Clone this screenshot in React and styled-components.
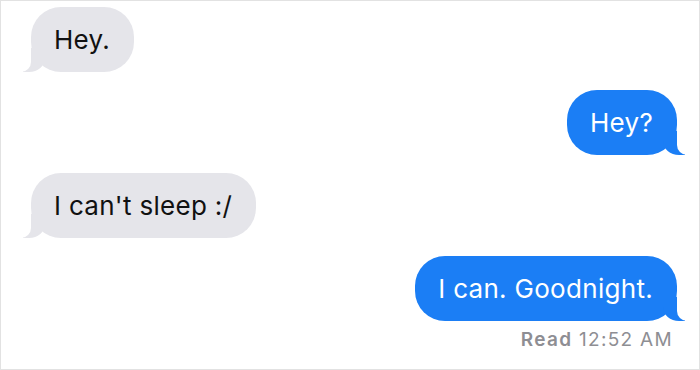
import React from "react";
import styled, { createGlobalStyle, css } from "styled-components";

const Global = createGlobalStyle`
  html, body { margin: 0; padding: 0; background: #ffffff; }
  body { font-family: Inter, "Liberation Sans", Arial, sans-serif; }
`;

const Screen = styled.div`
  box-sizing: border-box;
  width: 700px;
  height: 370px;
  border: 1px solid #e2e2e2;
  background: #ffffff;
  padding: 6px 22px 0 30px;
  display: flex;
  flex-direction: column;
  gap: 18px;
  overflow: hidden;
`;

const Row = styled.div`
  display: flex;
  flex-direction: column;
  align-items: ${(p) => (p.$me ? "flex-end" : "flex-start")};
`;

const GRAY = "#e5e5ea";
const BLUE = "#1b7ef5";

const Bubble = styled.div`
  position: relative;
  box-sizing: border-box;
  height: 65px;
  padding: 0 24px 0 23px;
  display: flex;
  align-items: center;
  border-radius: 30px;
  font-size: 26px;
  letter-spacing: 0.3px;
  line-height: 1;
  background: ${(p) => (p.$me ? BLUE : GRAY)};
  color: ${(p) => (p.$me ? "#ffffff" : "#111111")};
  white-space: nowrap;

  &::before,
  &::after {
    content: "";
    position: absolute;
    bottom: 0;
    height: 24px;
  }

  ${(p) =>
    p.$me
      ? css`
          &::before {
            right: -8px;
            width: 22px;
            background: ${BLUE};
            border-bottom-left-radius: 16px 14px;
          }
          &::after {
            right: -26px;
            width: 26px;
            background: #ffffff;
            border-bottom-left-radius: 10px;
          }
        `
      : css`
          &::before {
            left: -8px;
            width: 22px;
            background: ${GRAY};
            border-bottom-right-radius: 16px 14px;
          }
          &::after {
            left: -26px;
            width: 26px;
            background: #ffffff;
            border-bottom-right-radius: 10px;
          }
        `}
`;

const Text = styled.span`
  position: relative;
  z-index: 2;
`;

const Status = styled.div`
  margin-top: 7px;
  margin-right: 4px;
  font-size: 19px;
  letter-spacing: 1.3px;
  color: #8e8e93;
`;

const Strong = styled.span`
  font-weight: 600;
`;

const messages = [
  { me: false, text: "Hey." },
  { me: true, text: "Hey?" },
  { me: false, text: "I can't sleep :/" },
  { me: true, text: "I can. Goodnight.", status: true },
];

export default function App() {
  return (
    <>
      <Global />
      <Screen>
        {messages.map((m, i) => (
          <Row key={i} $me={m.me}>
            <Bubble $me={m.me}>
              <Text>{m.text}</Text>
            </Bubble>
            {m.status && (
              <Status>
                <Strong>Read</Strong> 12:52 AM
              </Status>
            )}
          </Row>
        ))}
      </Screen>
    </>
  );
}
